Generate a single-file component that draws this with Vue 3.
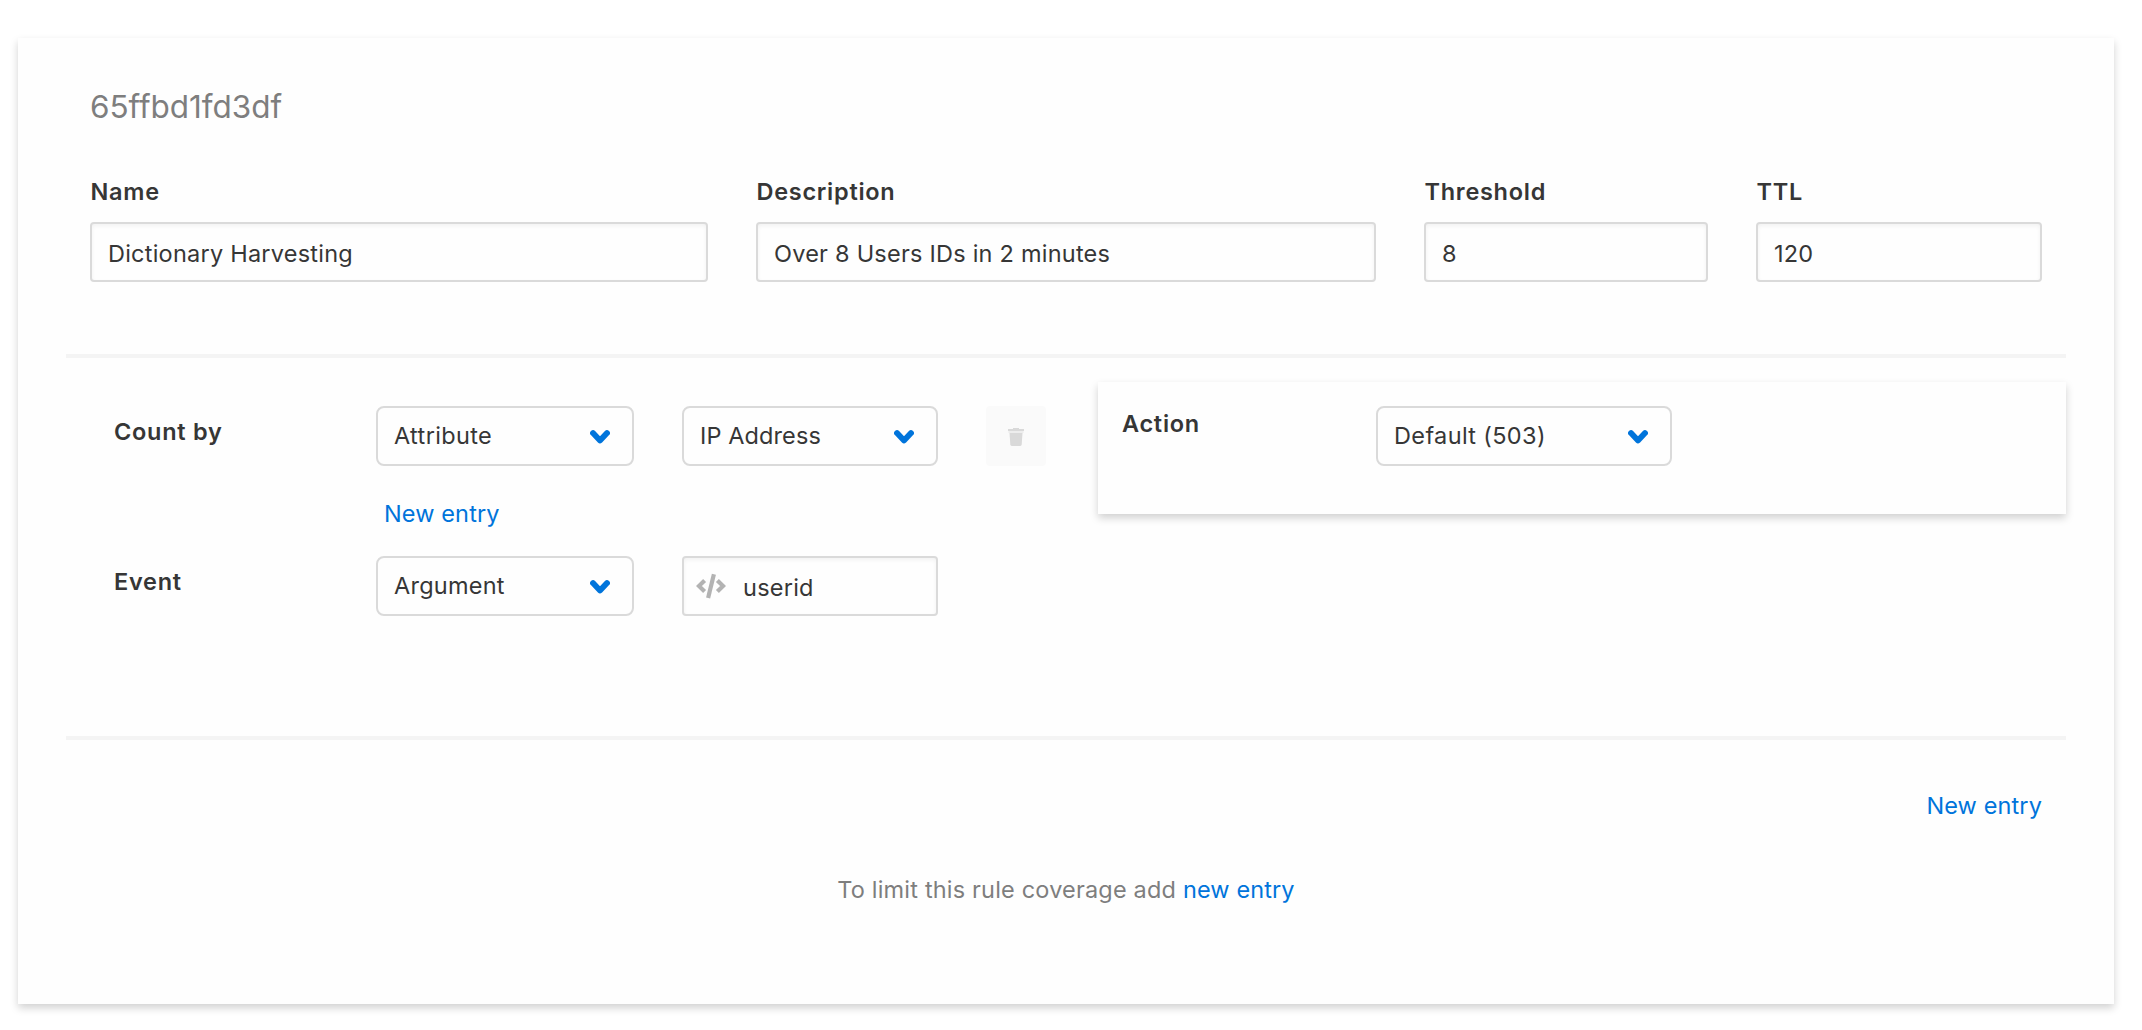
<script setup>
import { reactive, h } from 'vue'

const rule = reactive({
  id: '65ffbd1fd3df',
  fields: [
    { label: 'Name', value: 'Dictionary Harvesting', size: 'name' },
    { label: 'Description', value: 'Over 8 Users IDs in 2 minutes', size: 'desc' },
    { label: 'Threshold', value: '8', size: 'threshold' },
    { label: 'TTL', value: '120', size: 'ttl' },
  ],
  eventArgument: 'userid',
})

const Chevron = () =>
  h('svg', { width: 20, height: 14, viewBox: '0 0 20 14', 'aria-hidden': 'true' }, [
    h('path', {
      d: 'M3 3.1L10 10.4L17 3.1',
      fill: 'none',
      stroke: '#0074db',
      'stroke-width': 5.8,
      'stroke-linecap': 'round',
      'stroke-linejoin': 'round',
    }),
  ])
</script>

<template>
  <div class="page">
    <main class="card">
      <header class="head">
        <h1 class="title">{{ rule.id }}</h1>
        <div class="fields">
          <label v-for="f in rule.fields" :key="f.label" class="field" :class="f.size">
            <span class="label">{{ f.label }}</span>
            <input v-model="f.value" class="input" type="text" />
          </label>
        </div>
      </header>

      <section class="body">
        <div class="conditions">
          <div class="row">
            <span class="label">Count by</span>
            <button class="select wide"><span class="fit-wide">Attribute</span><Chevron /></button>
            <button class="select"><span class="fit-tight">IP Address</span><Chevron /></button>
            <button class="trash" aria-label="Remove">
              <svg width="16" height="18" viewBox="0 0 16 18">
                <path d="M5 0h6v1H16v2H0V1h5z" fill="#d9d9d9" />
                <path d="M0.5 3h15v2h-15z" fill="#ededed" />
                <path d="M1.500 5h13l-.8 11.600Q13.600 18 12.300 18H3.700Q2.400 18 2.300 16.600z" fill="#d9d9d9" />
              </svg>
            </button>
          </div>
          <a class="link add">New entry</a>
          <div class="row">
            <span class="label">Event</span>
            <button class="select wide"><span>Argument</span><Chevron /></button>
            <div class="code">
              <svg class="code-icon" width="30" height="26" viewBox="0 0 30 26">
                <g fill="none" stroke="#b3b3b3" stroke-width="4.2">
                  <path d="M8.600 7.400L2.900 13L8.600 18.600" />
                  <path d="M17.900 1.200L12.100 25" />
                  <path d="M21.400 7.400L27.100 13L21.400 18.600" />
                </g>
              </svg>
              <input v-model="rule.eventArgument" class="input" type="text" />
            </div>
          </div>
        </div>

        <aside class="action">
          <span class="label">Action</span>
          <button class="select"><span class="fit-wide">Default (503)</span><Chevron /></button>
        </aside>
      </section>

      <footer class="foot">
        <a class="link">New entry</a>
        <p class="hint">To limit this rule coverage add <a class="link">new entry</a></p>
      </footer>
    </main>
  </div>
</template>

<style>
body {
  background: #fff;
}
</style>

<style scoped>
.page {
  box-sizing: border-box;
  min-height: 1030px;
  padding: 38px 28px 26px 18px;
}
.card {
  box-sizing: border-box;
  height: 966px;
  padding: 0 48px;
  background: #fefefe;
  box-shadow: 0 4px 8px rgba(0, 0, 0, 0.18);
  color: #363636;
  font: 400 23.5px/29px Inter, sans-serif;
  letter-spacing: 0.23px;
}
.head {
  box-sizing: border-box;
  height: 320px;
  padding: 49px 24px 0;
  border-bottom: 4px solid #f4f4f4;
}
.title {
  margin: 0 0 51px;
  color: #7e7e7e;
  font-size: 31.5px;
  font-weight: 400;
  line-height: 39px;
  letter-spacing: -0.05px;
}
.fields {
  display: flex;
  gap: 48px;
}
.field {
  display: flex;
  flex-direction: column;
  gap: 16px;
}
.name { width: 618px; }
.desc { width: 620px; }
.threshold { width: 284px; }
.ttl { width: 286px; }
.label {
  font-weight: 600;
  letter-spacing: 0.72px;
}
.field .label { padding-left: 0.5px; }
.input {
  box-sizing: border-box;
  width: 100%;
  height: 60px;
  margin: 0;
  padding: 3px 16px 0;
  border: 2px solid #dadada;
  border-radius: 4px;
  outline: 0;
  background: #fefefe;
  box-shadow: inset 0 2px 4px rgba(0, 0, 0, 0.05);
  color: inherit;
  font: inherit;
  letter-spacing: inherit;
}
.body {
  box-sizing: border-box;
  display: flex;
  align-items: flex-start;
  justify-content: space-between;
  height: 382px;
  border-bottom: 4px solid #f4f4f4;
}
.conditions {
  display: flex;
  flex-direction: column;
  padding: 48px 0 0 48px;
}
.row {
  display: flex;
  align-items: flex-start;
  gap: 48px;
}
.row .label {
  width: 214px;
  padding-top: 11px;
}
.select {
  box-sizing: border-box;
  display: flex;
  align-items: center;
  justify-content: space-between;
  width: 256px;
  height: 60px;
  margin: 0;
  padding: 0 22px 1px 16px;
  border: 2px solid #dadada;
  border-radius: 8px;
  background: #fefefe;
  color: inherit;
  font: inherit;
  letter-spacing: inherit;
  white-space: nowrap;
}
.select.wide { width: 258px; }
.select svg { margin-top: 3px; }
.fit-wide { letter-spacing: 0.36px; }
.fit-tight { letter-spacing: 0.1px; }
.trash {
  display: flex;
  align-items: center;
  justify-content: center;
  width: 60px;
  height: 60px;
  padding: 2px 0 0;
  border: 0;
  border-radius: 4px;
  background: #fafafa;
}
.link {
  color: #0074db;
  letter-spacing: 0.12px;
}
.add {
  margin: 33px 0 28px 270px;
}
.code {
  position: relative;
  width: 256px;
}
.code .input { padding-left: 59px; }
.code-icon {
  position: absolute;
  top: 17px;
  left: 14px;
}
.action {
  box-sizing: border-box;
  display: flex;
  align-items: flex-start;
  width: 968px;
  height: 132px;
  margin-top: 24px;
  padding: 24px;
  box-shadow: 0 4px 8px rgba(0, 0, 0, 0.18);
  background: #fefefe;
}
.action .label {
  width: 254px;
  padding-top: 3px;
}
.action .select { width: 296px; }
.foot {
  display: flex;
  flex-direction: column;
  padding: 51px 24px 0;
}
.foot > .link { align-self: flex-end; }
.hint {
  margin: 55px 0 0;
  color: #7e7e7e;
  text-align: center;
  letter-spacing: 0.18px;
}
</style>
